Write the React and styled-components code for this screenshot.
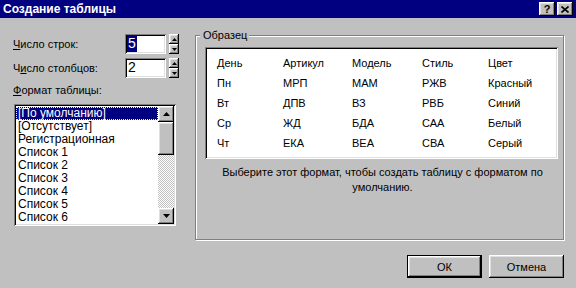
import React from "react";
import styled, { createGlobalStyle } from "styled-components";

const Global = createGlobalStyle`
  html, body { margin: 0; padding: 0; background: #c0c0c0; }
  body { font-family: "Liberation Sans", Arial, sans-serif; font-size: 11px; color: #000; }
  * { box-sizing: border-box; }
`;

const raised = `box-shadow: inset -1px -1px #000, inset 1px 1px #fff, inset -2px -2px #808080, inset 2px 2px #dfdfdf;`;
const sunken = `box-shadow: inset 1px 1px #808080, inset -1px -1px #fff, inset 2px 2px #000, inset -2px -2px #dfdfdf;`;

const Window = styled.div`
  width: 576px;
  height: 288px;
  background: #c0c0c0;
  overflow: hidden;
  display: flex;
  flex-direction: column;
`;

const TitleBar = styled.div`
  flex: none;
  height: 18px;
  background: #000080;
  display: flex;
  align-items: center;
  padding: 0 3px 0 3px;
`;

const Title = styled.div`
  flex: 1;
  color: #fff;
  font-weight: bold;
  font-size: 12px;
  line-height: 18px;
  white-space: nowrap;
`;

const CapButton = styled.div`
  width: 16px;
  height: 14px;
  background: #c0c0c0;
  ${raised}
  display: flex;
  align-items: center;
  justify-content: center;
  margin-left: ${(p) => p.$gap || 0}px;
  font: bold 11px "Liberation Sans", Arial, sans-serif;
  line-height: 14px;
  color: #000;
`;

const Body = styled.div`
  flex: 1;
  display: grid;
  grid-template-columns: 166px 369px;
  column-gap: 16px;
  align-content: start;
  padding: 11px 12px 0 13px;
`;

const LeftCol = styled.div`
  margin-top: 5px;
  display: flex;
  flex-direction: column;
`;

const SpinRow = styled.div`
  display: flex;
  align-items: center;
  height: 20px;
  margin-top: ${(p) => p.$top || 0}px;
`;

const Label = styled.div`
  width: 112px;
  line-height: 13px;
  white-space: nowrap;
`;

const Field = styled.div`
  width: 41px;
  height: 20px;
  background: #fff;
  ${sunken}
  padding: 1px 0 0 2px;
  font-size: 14px;
  line-height: 17px;
  display: flex;
  align-items: flex-start;
`;

const FieldText = styled.span`
  display: inline-block;
  padding: 0 1px;
  background: ${(p) => (p.$selected ? "#000080" : "transparent")};
  color: ${(p) => (p.$selected ? "#fff" : "#000")};
`;

const Spinner = styled.div`
  margin-left: 3px;
  display: flex;
  flex-direction: column;
  width: 10px;
  height: 20px;
`;

const SpinButton = styled.div`
  width: 10px;
  height: 10px;
  background: #c0c0c0;
  ${raised}
  display: flex;
  align-items: center;
  justify-content: center;
`;

const FormatLabel = styled.div`
  margin-top: 6px;
  line-height: 13px;
`;

const ListBox = styled.div`
  margin: 7px 0 0 1px;
  width: 162px;
  height: 122px;
  background: #fff;
  ${sunken}
  padding: 2px;
  display: flex;
`;

const Items = styled.div`
  flex: 1;
  overflow: hidden;
  padding-top: 1px;
`;

const Item = styled.div`
  height: 13px;
  line-height: 13px;
  font-size: 12px;
  padding-left: 2px;
  white-space: nowrap;
  background: ${(p) => (p.$selected ? "#000080" : "transparent")};
  color: ${(p) => (p.$selected ? "#fff" : "#000")};
  outline: ${(p) => (p.$selected ? "1px dotted #ffff80" : "none")};
  outline-offset: -1px;
`;

const ScrollBar = styled.div`
  width: 16px;
  display: flex;
  flex-direction: column;
  background: repeating-conic-gradient(#fff 0 25%, #c0c0c0 0 50%) 0 0 / 2px 2px;
`;

const ScrollButton = styled.div`
  width: 16px;
  height: ${(p) => p.$h || 16}px;
  flex: none;
  background: #c0c0c0;
  ${raised}
  display: flex;
  align-items: center;
  justify-content: center;
`;

const Track = styled.div`
  flex: 1;
`;

const Group = styled.fieldset`
  margin: 0;
  padding: 5px 5px 0 9px;
  min-width: 0;
  height: 211px;
  border: 1px solid #808080;
  box-shadow: inset 1px 1px #fff, 1px 1px #fff;
`;

const Legend = styled.legend`
  margin-left: -5px;
  padding: 0 2px 0 3px;
  line-height: 13px;
  background: #c0c0c0;
`;

const Preview = styled.div`
  width: 353px;
  height: 112px;
  background: #fff;
  ${sunken}
  padding: 6px 0 0 12px;
  display: grid;
  grid-template-columns: 66px 69px 70px 66px 1fr;
  grid-auto-rows: 20px;
  align-items: center;
`;

const Cell = styled.div`
  white-space: nowrap;
  line-height: 13px;
`;

const Description = styled.div`
  margin-top: 6px;
  text-align: center;
  line-height: 15px;
  padding-left: 2px;
`;

const ButtonRow = styled.div`
  grid-column: 2;
  display: flex;
  justify-content: flex-end;
  gap: 7px;
  margin-top: 15px;
`;

const PushButton = styled.div`
  width: 75px;
  height: 23px;
  display: flex;
  align-items: center;
  justify-content: center;
  background: #c0c0c0;
  box-shadow: ${(p) =>
    p.$default
      ? "inset 0 0 0 1px #000, inset -2px -2px #000, inset 2px 2px #fff, inset -3px -3px #808080, inset 3px 3px #dfdfdf"
      : "inset -1px -1px #000, inset 1px 1px #fff, inset -2px -2px #808080, inset 2px 2px #dfdfdf"};
`;

const Arrow = ({ dir = "up", w = 7, h = 4 }) => (
  <svg width={w} height={h} viewBox={`0 0 ${w} ${h}`} style={{ display: "block" }}>
    <polygon
      points={
        dir === "up"
          ? `${w / 2},0 ${w},${h} 0,${h}`
          : `0,0 ${w},0 ${w / 2},${h}`
      }
      fill="#000"
    />
  </svg>
);

const CloseGlyph = () => (
  <svg width="8" height="7" viewBox="0 0 8 7" style={{ display: "block" }}>
    <path d="M0.5 0.5 L7.5 6.5 M7.5 0.5 L0.5 6.5" stroke="#000" strokeWidth="1.6" />
  </svg>
);

const Spin = ({ label, value, selected, top }) => (
  <SpinRow $top={top}>
    <Label>{label}</Label>
    <Field>
      <FieldText $selected={selected}>{value}</FieldText>
    </Field>
    <Spinner>
      <SpinButton>
        <Arrow dir="up" w={5} h={3} />
      </SpinButton>
      <SpinButton>
        <Arrow dir="down" w={5} h={3} />
      </SpinButton>
    </Spinner>
  </SpinRow>
);

const formats = [
  "[По умолчанию]",
  "[Отсутствует]",
  "Регистрационная",
  "Список 1",
  "Список 2",
  "Список 3",
  "Список 4",
  "Список 5",
  "Список 6",
];

const table = [
  ["День", "Артикул", "Модель", "Стиль", "Цвет"],
  ["Пн", "МРП", "МАМ", "РЖВ", "Красный"],
  ["Вт", "ДПВ", "ВЗ", "РВБ", "Синий"],
  ["Ср", "ЖД", "БДА", "САА", "Белый"],
  ["Чт", "ЕКА", "ВЕА", "СВА", "Серый"],
];

export default function App() {
  return (
    <>
      <Global />
      <Window>
        <TitleBar>
          <Title>Создание таблицы</Title>
          <CapButton>?</CapButton>
          <CapButton $gap={2}>
            <CloseGlyph />
          </CapButton>
        </TitleBar>
        <Body>
          <LeftCol>
            <Spin
              label={
                <>
                  <u>Ч</u>исло строк:
                </>
              }
              value="5"
              selected
            />
            <Spin
              label={
                <>
                  Ч<u>и</u>сло столбцов:
                </>
              }
              value="2"
              top={4}
            />
            <FormatLabel>
              <u>Ф</u>ормат таблицы:
            </FormatLabel>
            <ListBox>
              <Items>
                {formats.map((f, i) => (
                  <Item key={f} $selected={i === 0}>
                    {f}
                  </Item>
                ))}
              </Items>
              <ScrollBar>
                <ScrollButton>
                  <Arrow dir="up" />
                </ScrollButton>
                <ScrollButton $h={33} />
                <Track />
                <ScrollButton>
                  <Arrow dir="down" />
                </ScrollButton>
              </ScrollBar>
            </ListBox>
          </LeftCol>
          <Group>
            <Legend>Образец</Legend>
            <Preview>
              {table.flatMap((row, r) =>
                row.map((c, ci) => <Cell key={`${r}-${ci}`}>{c}</Cell>)
              )}
            </Preview>
            <Description>
              Выберите этот формат, чтобы создать таблицу с форматом по
              <br />
              умолчанию.
            </Description>
          </Group>
          <ButtonRow>
            <PushButton $default>ОК</PushButton>
            <PushButton>Отмена</PushButton>
          </ButtonRow>
        </Body>
      </Window>
    </>
  );
}
